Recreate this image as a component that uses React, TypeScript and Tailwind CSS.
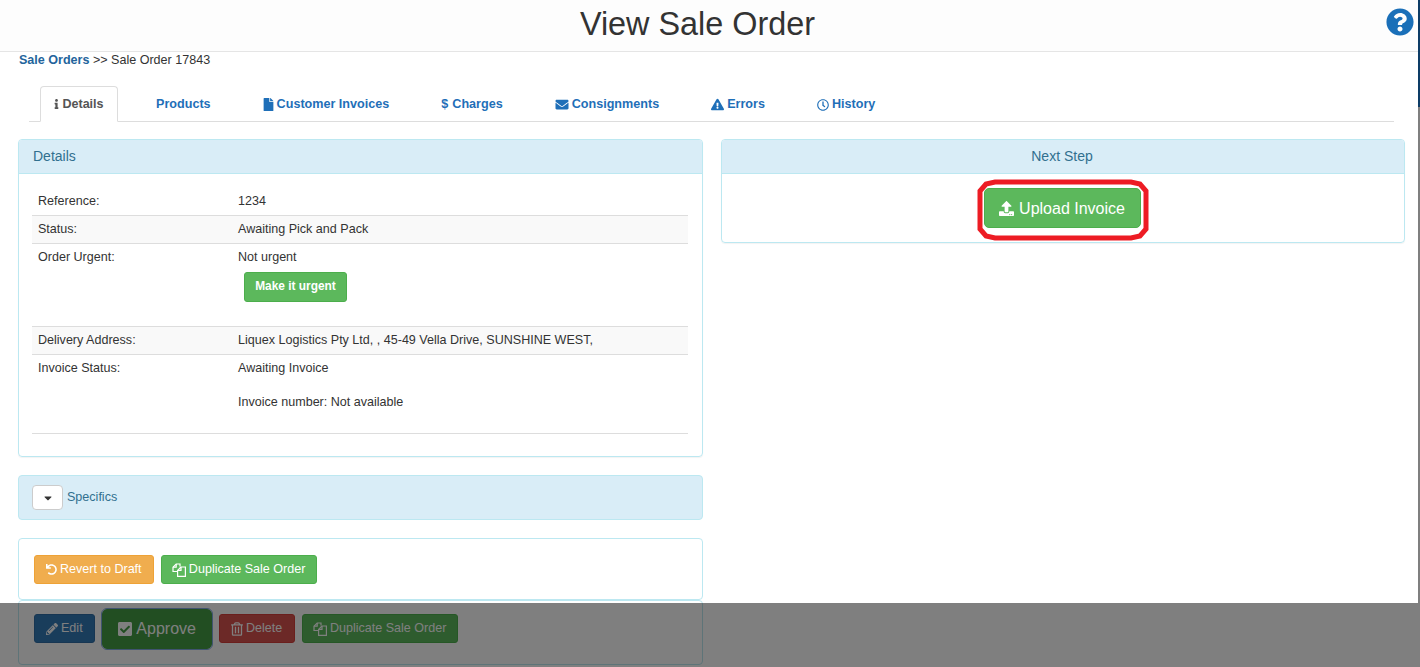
import {
  FaCaretDown,
  FaCheckSquare,
  FaEnvelope,
  FaExclamationTriangle,
  FaFile,
  FaInfo,
  FaPencilAlt,
  FaQuestionCircle,
  FaRegClock,
  FaRegTrashAlt,
  FaUndo,
  FaUpload,
} from "react-icons/fa";

const TABS = [
  { label: "Products", icon: null },
  { label: "Customer Invoices", icon: <FaFile className="h-[13px] w-[11px]" /> },
  { label: "Charges", icon: <span className="w-[8px]">$</span> },
  { label: "Consignments", icon: <FaEnvelope className="h-[13px] w-[14px]" /> },
  { label: "Errors", icon: <FaExclamationTriangle className="h-[13px] w-[13px]" /> },
  { label: "History", icon: <FaRegClock className="h-[12px] w-[12px]" /> },
];

function Row({ label, striped, className, children }: { label: string; striped?: boolean; className: string; children: React.ReactNode }) {
  return (
    <div className={`flex border-b border-[#dddddd] px-[6px] ${striped ? "bg-[#f9f9f9]" : ""} ${className}`}>
      <div className="w-[200px] shrink-0 leading-[20px]">{label}</div>
      <div className="leading-[20px]">{children}</div>
    </div>
  );
}

function Btn({ className, children }: { className: string; children: React.ReactNode }) {
  return (
    <div className={`flex h-[29px] items-center gap-[3px] whitespace-nowrap rounded-[3px] border px-[11px] text-white ${className}`}>
      {children}
    </div>
  );
}

// fa-files-o: two overlapping outlined sheets
function FilesIcon() {
  return (
    <svg viewBox="0 0 14 14" className="h-[14px] w-[14px] shrink-0" fill="none" stroke="currentColor" strokeWidth="1.2">
      <path d="M5 8.5H1V4.2L4.2 1H8V3.5" />
      <path d="M4.2 1V4.2H1" />
      <path d="M9 4L5.6 7.4V13.4H13.4V4Z" />
      <path d="M9 4V7.4H5.6" />
    </svg>
  );
}

export default function App() {
  return (
    <div className="relative h-[667px] overflow-hidden bg-white font-['Liberation_Sans',Arial,sans-serif] text-[12.55px] text-[#333333]">
      <header className="relative flex h-[52px] justify-center border-b border-[#e5e5e5] bg-[#fdfdfd] pr-[25px]">
        <h1 className="text-[32.4px] leading-[49px] text-[#333333]">View Sale Order</h1>
        <FaQuestionCircle className="absolute top-[8px] right-[6px] h-[28px] w-[28px] text-[#1a6fb8]" />
      </header>

      <div className="mt-px pl-[19px] leading-[15px]">
        <span className="font-bold text-[#23649c]">Sale Orders</span> &gt;&gt; Sale Order 17843
      </div>

      <nav className="mt-[18px] ml-[29px] mr-[26px] flex h-[36px] items-end border-b border-[#dddddd] pl-[11px]">
        <div className="-mb-px flex h-[36px] w-[78px] items-center justify-center gap-[3px] rounded-t-[4px] border border-[#dddddd] border-b-white bg-white font-bold text-[#555555]">
          <FaInfo className="h-[10px] w-[5px]" /> Details
        </div>
        <div className="ml-[38px] flex gap-[52px] text-[12.6px]">
          {TABS.map((t) => (
            <div key={t.label} className="flex h-[35px] items-center gap-[3px] pt-[2px] font-bold text-[#1f6fb8]">
              {t.icon}
              {t.label}
            </div>
          ))}
        </div>
      </nav>

      <main className="mt-[17px] flex items-start gap-[18px] pl-[18px] pr-[15px]">
        <div className="flex w-[685px] shrink-0 flex-col gap-[18px]">
          <section className="h-[318px] rounded-[4px] border border-[#bce8f1] shadow-[0_1px_1px_rgba(0,0,0,0.05)]">
            <div className="h-[34px] rounded-t-[3px] border-b border-[#bce8f1] bg-[#d9edf7] pl-[14px] text-[14px] leading-[33px] text-[#31708f]">
              Details
            </div>
            <div className="pl-[13px] pr-[14px] pt-[13px]">
              <Row label="Reference:" className="h-[29px] pt-[4px]">1234</Row>
              <Row label="Status:" striped className="h-[28px] pt-[3px]">Awaiting Pick and Pack</Row>
              <Row label="Order Urgent:" className="h-[83px] pt-[3px]">
                Not urgent
                <div className="mt-[5px] ml-[6px] flex h-[30px] w-[103px] items-center justify-center rounded-[3px] border border-[#4cae4c] bg-[#5cb85c] pb-[3px] text-[11.9px] font-bold text-white">
                  Make it urgent
                </div>
              </Row>
              <Row label="Delivery Address:" striped className="h-[28px] pt-[3px]">
                Liquex Logistics Pty Ltd, , 45-49 Vella Drive, SUNSHINE WEST,
              </Row>
              <Row label="Invoice Status:" className="h-[79px] pt-[3px]">
                Awaiting Invoice
                <div className="mt-[14px]">Invoice number: Not available</div>
              </Row>
            </div>
          </section>

          <section className="flex h-[45px] items-center gap-[4px] rounded-[4px] border border-[#bce8f1] bg-[#d9edf7] pl-[13px] text-[#31708f]">
            <div className="flex h-[25px] w-[31px] items-center justify-center rounded-[4px] border border-[#cccccc] bg-white">
              <FaCaretDown className="h-[12px] w-[12px] text-[#333333]" />
            </div>
            <span className="pb-px">Specifics</span>
          </section>

          <section className="flex h-[62px] items-center gap-[7px] rounded-[4px] border border-[#bce8f1] pl-[15px] pt-px">
            <Btn className="border-[#eea236] bg-[#f0ad4e]">
              <FaUndo className="h-[11px] w-[11px]" /> Revert to Draft
            </Btn>
            <Btn className="w-[156px] justify-center border-[#4cae4c] bg-[#5cb85c] px-0">
              <FilesIcon /> Duplicate Sale Order
            </Btn>
          </section>

          <section className="-mt-[18px] flex h-[65px] items-center gap-[7px] rounded-[4px] border border-[#bce8f1] pb-[8px] pl-[15px]">
            <Btn className="border-[#2e6da4] bg-[#337ab7]">
              <FaPencilAlt className="h-[12px] w-[12px]" /> Edit
            </Btn>
            <div className="flex h-[40px] w-[110px] items-center justify-center gap-[3px] rounded-[5px] border border-[#449d44] bg-[#449d44] text-[16px] text-white outline-1 outline-[#80a8e0]">
              <FaCheckSquare className="h-[16px] w-[16px]" /> Approve
            </div>
            <Btn className="w-[76px] justify-center border-[#d43f3a] bg-[#d9534f] px-0">
              <FaRegTrashAlt className="h-[14px] w-[12px]" /> Delete
            </Btn>
            <Btn className="w-[156px] justify-center border-[#4cae4c] bg-[#5cb85c] px-0">
              <FilesIcon /> Duplicate Sale Order
            </Btn>
          </section>
        </div>

        <section className="h-[104px] w-[684px] shrink-0 rounded-[4px] border border-[#bce8f1] shadow-[0_1px_1px_rgba(0,0,0,0.05)]">
          <div className="h-[34px] rounded-t-[3px] border-b border-[#bce8f1] bg-[#d9edf7] pr-[2px] text-center text-[14px] leading-[33px] text-[#31708f]">
            Next Step
          </div>
          <div className="flex justify-center pt-[14px] pr-[2px]">
            <div className="relative flex h-[40px] w-[157px] items-center justify-center gap-[5px] rounded-[5px] border border-[#4cae4c] bg-[#5cb85c] pt-px text-[16px] text-white">
              <FaUpload className="h-[15px] w-[15px]" /> Upload Invoice
              {/* Hand-drawn annotation round the button */}
              <svg viewBox="0 0 172 62" className="absolute -top-[10px] -left-[8px] h-[62px] w-[172px]" fill="none" stroke="#ed1c24" strokeWidth="5">
                <path d="M18 3H154L163 5L169 12V50L163 57L154 59H18L9 57L3 50V12L9 5Z" />
              </svg>
            </div>
          </div>
        </section>
      </main>

      {/* Dimmed strip along the bottom */}
      <div className="absolute inset-x-0 bottom-0 h-[64px] bg-black/50" />
      {/* Scroll thumb */}
      <div className="absolute top-0 right-0 h-[107px] w-[2px] bg-[#0d3c66]" />
      <div className="absolute top-[107px] right-0 bottom-0 w-[2px] bg-[#7f7f7f]" />
    </div>
  );
}
